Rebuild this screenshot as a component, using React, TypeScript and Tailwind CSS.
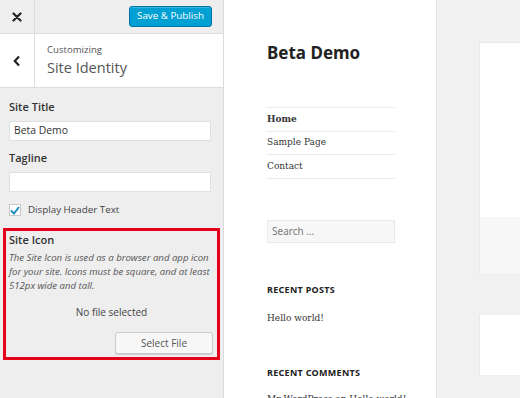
import React from 'react';

const noto = { fontFamily: '"Noto Sans", sans-serif' };

export default function App() {
  return (
    <div className="flex h-[398px] w-[520px] overflow-hidden bg-white font-['Open_Sans',sans-serif]">
      {/* Customizer sidebar */}
      <aside className="flex w-[224px] shrink-0 flex-col border-r border-[#dcdcdc] bg-[#eeeeee] text-[#444]">
        <div className="flex h-[34px] items-center border-b border-[#dddddd]">
          <button className="flex h-full w-[35px] items-center justify-center border-r border-[#dddddd] text-[#222]">
            <svg width="10" height="10" viewBox="0 0 10 10">
              <path d="M1.5 1.5 L8.5 8.5 M8.5 1.5 L1.5 8.5" stroke="currentColor" strokeWidth="2.2" strokeLinecap="round" />
            </svg>
          </button>
          <div className="flex flex-1 justify-end pr-[11px]">
            <button className="h-[21px] w-[83px] rounded-[3px] border border-[#0073aa] bg-[#00a0d2] text-[9.8px] font-medium text-white shadow-[inset_0_1px_0_rgba(120,200,230,0.5)]">
              Save &amp; Publish
            </button>
          </div>
        </div>
        <div className="flex h-[54px] border-b border-[#dddddd] bg-white">
          <button className="flex w-[35px] items-center justify-center border-r border-[#dddddd] text-[#222]">
            <svg width="8" height="12" viewBox="0 0 8 12">
              <path d="M6 1.5 L1.8 6 L6 10.5" fill="none" stroke="currentColor" strokeWidth="2.2" />
            </svg>
          </button>
          <div className="flex flex-col justify-center pl-[12px]">
            <span className="text-[9.6px] leading-[14px] text-[#555]">Customizing</span>
            <span className="text-[14.5px] leading-[22px] text-[#555]">Site Identity</span>
          </div>
        </div>
        <div className="flex flex-col pl-[9px] pr-[12px] pt-[10px]">
          <label className="text-[11px] font-semibold leading-[18px] text-[#333]">Site Title</label>
          <div className="mt-[5px] flex h-[20px] items-center border border-[#e0e0e0] bg-white px-[4px] text-[10.4px] text-[#333]">
            Beta Demo
          </div>
          <label className="mt-[8px] text-[11px] font-semibold leading-[18px] text-[#333]">Tagline</label>
          <div className="mt-[5px] h-[20px] border border-[#e0e0e0] bg-white" />
          <div className="mt-[11px] flex items-center gap-[7px]">
            <span className="flex h-[12px] w-[12px] items-center justify-center border border-[#c8c8c8] bg-white">
              <svg width="10" height="9" viewBox="0 0 10 9">
                <path d="M1 4.5 L4 7.5 L9 1" fill="none" stroke="#1e8cbe" strokeWidth="2" />
              </svg>
            </span>
            <span className="text-[9.8px] text-[#444]">Display Header Text</span>
          </div>
        </div>
        <div className="mx-[3px] mt-[10px] h-[132px] border-[3px] border-[#e5001c] px-[3px]">
          <div className="text-[11px] font-semibold leading-[18px] text-[#333]">Site Icon</div>
          <p className="mt-[2px] text-[9.6px] italic leading-[14.2px] text-[#555]">
            The Site Icon is used as a browser and app icon for your site. Icons must be square, and at least 512px wide and tall.
          </p>
          <div className="mt-[11px] text-center text-[10px] leading-[16px] text-[#444]">No file selected</div>
          <div className="mt-[12px] flex justify-end pr-[1px]">
            <button className="h-[22px] w-[98px] rounded-[3px] border border-[#cccccc] bg-[#f7f7f7] text-[10px] text-[#555] shadow-[0_1px_0_#ccc]">
              Select File
            </button>
          </div>
        </div>
      </aside>

      {/* Site preview */}
      <main className="flex w-[212px] shrink-0 flex-col pl-[43px] pr-[41px] pt-[41px]">
        <h1 className="text-[17px] font-bold leading-[24px] text-[#222]" style={noto}>
          Beta Demo
        </h1>
        <nav className="mt-[42px] border-t border-[#eaeaea] font-['DejaVu_Serif',serif] text-[9px] text-[#333]">
          <div className="flex h-[23.5px] items-center border-b border-[#eaeaea] font-bold">Home</div>
          <div className="flex h-[23.5px] items-center border-b border-[#eaeaea]">Sample Page</div>
          <div className="flex h-[23.5px] items-center border-b border-[#eaeaea]">Contact</div>
        </nav>
        <div className="mt-[41px] flex h-[23px] shrink-0 items-center border border-[#eaeaea] bg-[#f7f7f7] px-[4px] text-[10px] text-[#777]" style={noto}>
          Search …
        </div>
        <h2 className="mt-[40px] text-[9px] font-bold uppercase tracking-[0.3px] text-[#222]" style={noto}>
          Recent Posts
        </h2>
        <div className="mt-[16px] font-['DejaVu_Serif',serif] text-[9px] text-[#333]">Hello world!</div>
        <h2 className="mt-[40px] text-[9px] font-bold uppercase tracking-[0.3px] text-[#222]" style={noto}>
          Recent Comments
        </h2>
        <div className="mt-[14px] whitespace-nowrap font-['DejaVu_Serif',serif] text-[9px] text-[#333]">Mr WordPress on Hello world!</div>
      </main>

      {/* Content column */}
      <section className="flex flex-1 flex-col border-l border-[#e2e2e2] bg-[#f1f1f1] pl-[42px] pt-[42px]">
        <div className="h-[175px] shrink-0 border-l border-t border-[#e8e8e8] bg-white" />
        <div className="h-[56px] shrink-0 border-l border-[#e8e8e8] bg-[#f7f7f7]" />
        <div className="mt-[42px] h-[60px] shrink-0 border-l border-[#e8e8e8] bg-white" />
      </section>
    </div>
  );
}
